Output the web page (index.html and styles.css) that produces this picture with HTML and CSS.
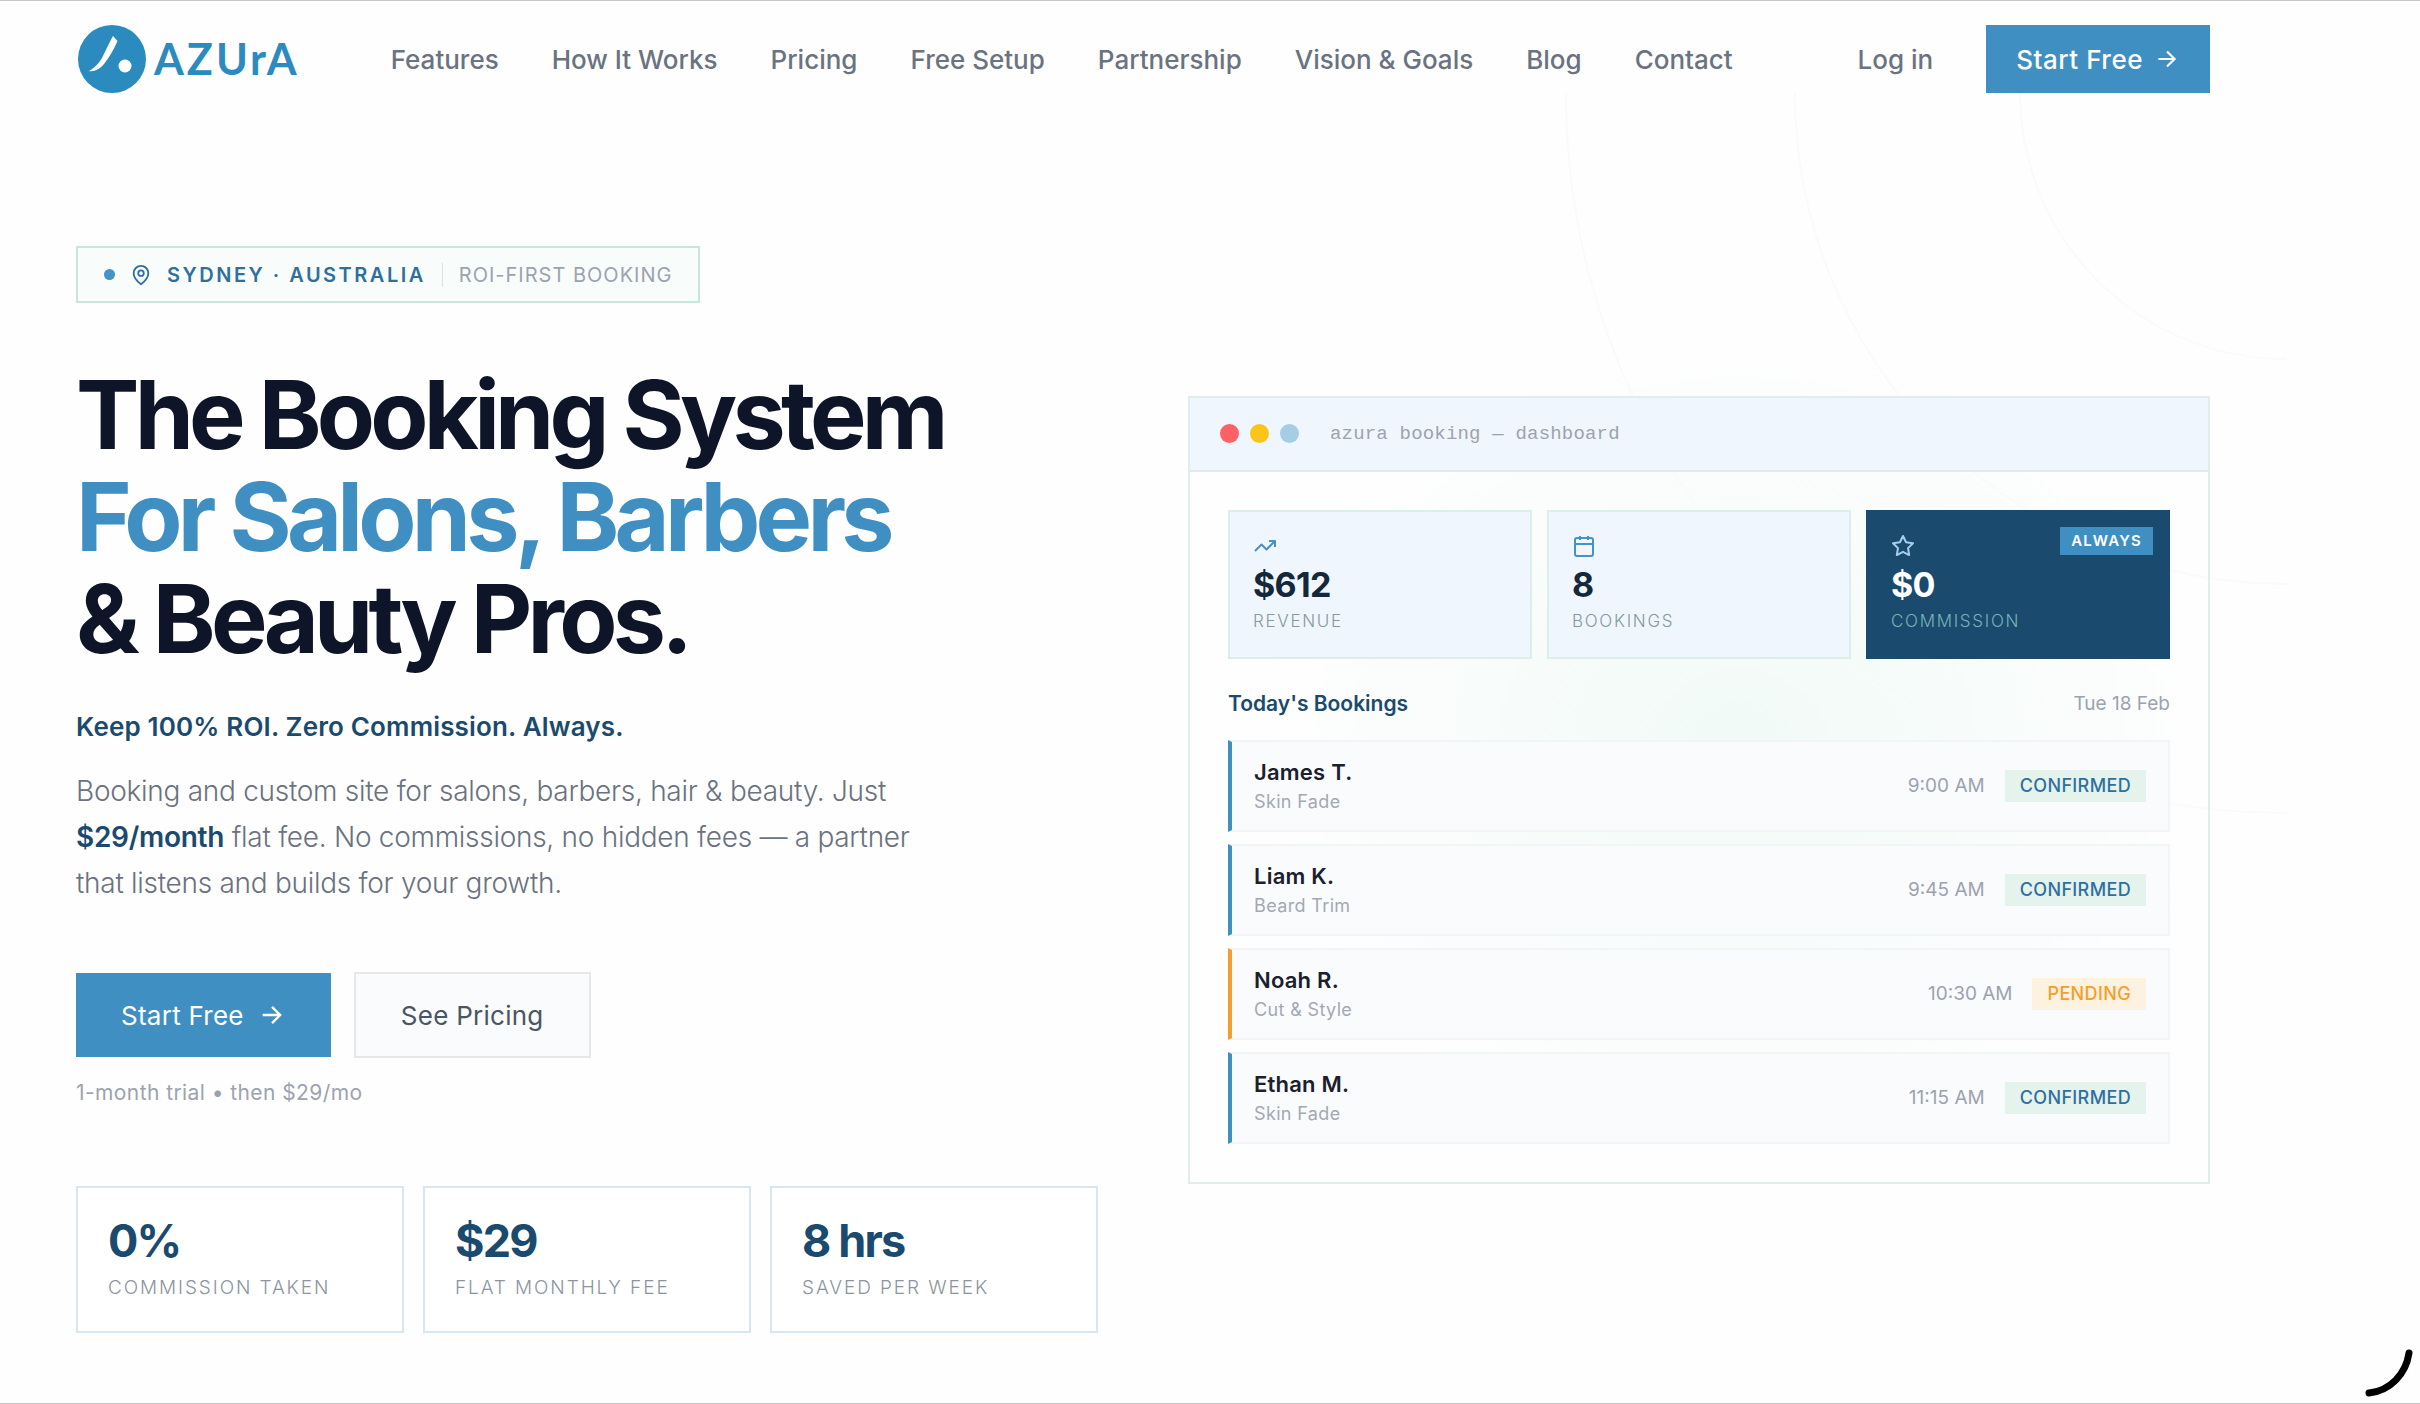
FILE: index.html
```html
<!DOCTYPE html>
<html lang="en">
  <head>
    <meta charset="utf-8" />
    <meta name="viewport" content="width=device-width, initial-scale=1" />
    <title>Azura Booking</title>
    <link rel="stylesheet" href="styles.css">
  </head>

  <body>
    <div class="page">
      <header class="site-header">
        <a class="logo" href="#">
          <svg class="logo-mark" viewBox="0 0 68 68" aria-hidden="true">
            <circle cx="34" cy="34" r="34" fill="#2b8bbf"/>
            <path d="M35 11 L39.500 16 C36 24 31 33 26 39 C22 44 16 47 11 46 C18 42 22 37 25 31 C28 25 31 18 35 11 Z" fill="#fff"/>
            <circle cx="47" cy="41" r="6.500" fill="#fff"/>
          </svg>
          <span class="logo-text">AZUrA</span>
        </a>
        <nav class="main-nav">
          <a href="#features">Features</a>
          <a href="#how">How It Works</a>
          <a href="#pricing">Pricing</a>
          <a href="#setup">Free Setup</a>
          <a href="#partnership">Partnership</a>
          <a href="#vision">Vision &amp; Goals</a>
          <a href="#blog">Blog</a>
          <a href="#contact">Contact</a>
        </nav>
        <div class="header-actions">
          <a class="login" href="#login">Log in</a>
          <button class="btn btn-primary btn-small" type="button">Start Free
            <svg class="arrow" viewBox="0 0 24 24"><path d="M4 12h15M12 5l7 7-7 7"/></svg>
          </button>
        </div>
      </header>

      <main class="hero">
        <svg class="rings" viewBox="0 0 722 722" aria-hidden="true">
          <circle cx="722" cy="0" r="266"/>
          <circle cx="722" cy="0" r="491"/>
          <circle cx="722" cy="0" r="720"/>
        </svg>

        <section class="intro">
          <div class="badge">
            <span class="badge-dot"></span>
            <svg class="pin" viewBox="0 0 24 24"><path d="M20 10c0 6-8 12-8 12s-8-6-8-12a8 8 0 0 1 16 0z"/><circle cx="12" cy="10" r="3"/></svg>
            <span class="badge-place">SYDNEY · AUSTRALIA</span>
            <span class="badge-note">ROI-FIRST BOOKING</span>
          </div>

          <h1>The Booking System<br><span class="accent">For Salons, Barbers</span><br>&amp; Beauty Pros.</h1>

          <p class="tagline">Keep 100% ROI. Zero Commission. Always.</p>
          <p class="lead">Booking and custom site for salons, barbers, hair &amp; beauty. Just <strong>$29/month</strong> flat fee. No commissions, no hidden fees — a partner that listens and builds for your growth.</p>

          <div class="cta">
            <button class="btn btn-primary btn-large" type="button">Start Free
              <svg class="arrow" viewBox="0 0 24 24"><path d="M4 12h15M12 5l7 7-7 7"/></svg>
            </button>
            <button class="btn btn-outline" type="button">See Pricing</button>
          </div>
          <p class="cta-note">1-month trial • then $29/mo</p>

          <div class="stats">
            <div class="stat">
              <div class="stat-value">0%</div>
              <div class="stat-label">COMMISSION TAKEN</div>
            </div>
            <div class="stat">
              <div class="stat-value">$29</div>
              <div class="stat-label">FLAT MONTHLY FEE</div>
            </div>
            <div class="stat">
              <div class="stat-value">8 hrs</div>
              <div class="stat-label">SAVED PER WEEK</div>
            </div>
          </div>
        </section>

        <section class="dashboard">
          <div class="window-bar">
            <span class="dot dot-red"></span>
            <span class="dot dot-yellow"></span>
            <span class="dot dot-blue"></span>
            <span class="window-title">azura booking — dashboard</span>
          </div>
          <div class="window-body">
            <div class="metrics">
              <div class="metric">
                <svg class="metric-icon" viewBox="0 0 24 24"><path d="M2 17l6.500-6.500 5 5L22 7"/><path d="M16 7h6v6"/></svg>
                <div class="metric-value">$612</div>
                <div class="metric-label">REVENUE</div>
              </div>
              <div class="metric">
                <svg class="metric-icon" viewBox="0 0 24 24"><rect x="3" y="4" width="18" height="18" rx="2"/><path d="M3 10h18M8 2v4M16 2v4"/></svg>
                <div class="metric-value">8</div>
                <div class="metric-label">BOOKINGS</div>
              </div>
              <div class="metric metric-dark">
                <span class="always">ALWAYS</span>
                <svg class="metric-icon" viewBox="0 0 24 24"><path d="M12 2l3.090 6.260L22 9.270l-5 4.870 1.180 6.880L12 17.770l-6.180 3.250L7 14.140 2 9.270l6.910-1.010z"/></svg>
                <div class="metric-value">$0</div>
                <div class="metric-label">COMMISSION</div>
              </div>
            </div>

            <div class="list-head">
              <h2>Today's Bookings</h2>
              <span class="date">Tue 18 Feb</span>
            </div>

            <ul class="bookings">
              <li class="booking">
                <div class="who">
                  <div class="name">James T.</div>
                  <div class="service">Skin Fade</div>
                </div>
                <span class="time">9:00 AM</span>
                <span class="status">CONFIRMED</span>
              </li>
              <li class="booking">
                <div class="who">
                  <div class="name">Liam K.</div>
                  <div class="service">Beard Trim</div>
                </div>
                <span class="time">9:45 AM</span>
                <span class="status">CONFIRMED</span>
              </li>
              <li class="booking pending">
                <div class="who">
                  <div class="name">Noah R.</div>
                  <div class="service">Cut &amp; Style</div>
                </div>
                <span class="time">10:30 AM</span>
                <span class="status">PENDING</span>
              </li>
              <li class="booking">
                <div class="who">
                  <div class="name">Ethan M.</div>
                  <div class="service">Skin Fade</div>
                </div>
                <span class="time">11:15 AM</span>
                <span class="status">CONFIRMED</span>
              </li>
            </ul>
          </div>
        </section>
      </main>
    </div>

    <svg class="corner-arc" viewBox="0 0 50 50" aria-hidden="true"><path d="M45 5 C42 26 26 43 5 45"/></svg>
  </body>
</html>
```

FILE: styles.css
```css
* {
  box-sizing: border-box;
}
body {
  margin: 0;
  min-height: 100vh;
  border-top: 1px solid #c8c8c8;
  border-bottom: 1px solid #c8c8c8;
  background-color: #fefefe;
  font-family: Inter, "Liberation Sans", sans-serif;
  color: #0f1528;
  overflow-x: hidden;
}
h1, h2, p, ul {
  margin: 0;
  padding: 0;
}
a {
  color: inherit;
  text-decoration: none;
}
svg {
  display: block;
  flex-shrink: 0;
}
.page {
  margin-right: 134px;
}

/* header */
.site-header {
  display: flex;
  align-items: center;
  padding: 24px 76px 0;
  font-size: 26px;
  font-weight: 500;
  color: #6b7280;
}
.logo {
  display: flex;
  align-items: center;
  gap: 8px;
  margin-left: 2px;
  color: #2b8bbf;
}
.logo-mark {
  width: 68px;
  height: 68px;
}
.logo-text {
  font-family: Lato, sans-serif;
  font-size: 43px;
  font-weight: 700;
  line-height: 68px;
  letter-spacing: 3px;
}
.main-nav {
  display: flex;
  gap: 53px;
  margin-left: 91px;
  white-space: nowrap;
}
.header-actions {
  display: flex;
  align-items: center;
  gap: 53px;
  margin-left: auto;
  white-space: nowrap;
}
.btn {
  display: flex;
  align-items: center;
  justify-content: center;
  border: 0;
  font-family: inherit;
  font-size: 26px;
  font-weight: 400;
  letter-spacing: 0.01em;
  cursor: pointer;
}
.btn-primary {
  background-color: #3f8fc3;
  color: #fff;
}
.btn-small {
  height: 68px;
  padding: 0 30px;
  gap: 11px;
  font-weight: 500;
  letter-spacing: 0.02em;
}
.arrow {
  width: 26px;
  height: 26px;
  fill: none;
  stroke: #fff;
  stroke-width: 2;
}

/* hero */
.hero {
  position: relative;
  display: grid;
  grid-template-columns: 1fr 1fr;
  gap: 90px;
  align-items: center;
  padding: 153px 76px 68px;
  background: radial-gradient(ellipse 480px 420px at 76% 50%, #f1faf6, #fefefe);
  overflow: hidden;
}
.rings {
  position: absolute;
  top: 0;
  right: 0;
  width: 722px;
  height: 722px;
  fill: none;
  stroke: #f9fbfb;
  stroke-width: 2;
}
.intro, .dashboard {
  position: relative;
}
.badge {
  display: flex;
  align-items: center;
  width: fit-content;
  height: 57px;
  padding: 0 26px;
  border: 2px solid #c8e6dc;
  background-color: #f8fdfb;
  font-size: 20px;
}
.badge-dot {
  width: 11px;
  height: 11px;
  border-radius: 50%;
  background-color: #4592c6;
}
.pin {
  width: 22px;
  height: 22px;
  margin: 0 15px;
  fill: none;
  stroke: #2f6f9f;
  stroke-width: 2;
}
.badge-place {
  font-weight: 600;
  letter-spacing: 0.125em;
  color: #2f6f9f;
}
.badge-note {
  margin-left: 16px;
  padding-left: 16px;
  border-left: 1px solid #dde3e3;
  letter-spacing: 0.05em;
  color: #9ca3af;
}
h1 {
  margin-top: 61px;
  font-size: 95px;
  font-weight: 700;
  line-height: 102px;
  letter-spacing: -0.05em;
  white-space: nowrap;
}
.accent {
  color: #3f8fc3;
}
.tagline {
  margin-top: 37px;
  font-size: 26px;
  font-weight: 600;
  line-height: 40px;
  letter-spacing: 0.006em;
  color: #1b4a6f;
}
.lead {
  max-width: 860px;
  margin-top: 21px;
  font-size: 28px;
  font-weight: 300;
  line-height: 46px;
  letter-spacing: -0.01em;
  color: #6b7280;
}
.lead strong {
  font-weight: 600;
  color: #1b4a6f;
}
.cta {
  display: flex;
  align-items: center;
  gap: 23px;
  margin-top: 66px;
}
.btn-large {
  height: 84px;
  padding: 0 45px;
  gap: 14px;
}
.btn-large .arrow {
  width: 28px;
  height: 28px;
}
.btn-outline {
  height: 86px;
  padding: 0 45px;
  border: 2px solid #e5e7eb;
  background-color: #f9fbfc;
  color: #4b5563;
}
.cta-note {
  margin-top: 20px;
  font-size: 21px;
  line-height: 30px;
  letter-spacing: 0.02em;
  color: #9ca3af;
}
.stats {
  display: grid;
  grid-template-columns: repeat(3, 1fr);
  gap: 19px;
  margin-top: 78px;
}
.stat {
  padding: 30px;
  border: 2px solid #d8e6f0;
  background-color: #fff;
}
.stat-value {
  font-size: 45px;
  font-weight: 700;
  line-height: 45px;
  letter-spacing: -0.04em;
  color: #1b4a6f;
}
.stat-label {
  margin-top: 12px;
  font-size: 19px;
  font-weight: 300;
  line-height: 26px;
  letter-spacing: 0.1em;
  color: #8d94a0;
}

/* dashboard preview */
.dashboard {
  border: 2px solid #dfeeea;
}
.window-bar {
  display: flex;
  align-items: center;
  gap: 11px;
  height: 74px;
  padding: 0 30px;
  border-bottom: 2px solid #e0ecec;
  background-color: #f0f6fd;
}
.dot {
  width: 19px;
  height: 19px;
  border-radius: 50%;
}
.dot-red {
  background-color: #fd6065;
}
.dot-yellow {
  background-color: #fcc419;
}
.dot-blue {
  background-color: #a5cde5;
}
.window-title {
  margin-left: 20px;
  font-family: "Liberation Mono", monospace;
  font-size: 19px;
  letter-spacing: 0.01em;
  color: #9ca3af;
}
.window-body {
  padding: 38px;
}
.metrics {
  display: grid;
  grid-template-columns: repeat(3, 1fr);
  gap: 15px;
}
.metric {
  position: relative;
  padding: 22px 23px 24px;
  border: 2px solid #dceeea;
  background-color: #f0f6fd;
}
.metric-icon {
  width: 24px;
  height: 24px;
  fill: none;
  stroke: #4592c6;
  stroke-width: 2;
  stroke-linejoin: round;
}
.metric-value {
  margin-top: 7px;
  font-size: 34px;
  font-weight: 700;
  line-height: 40px;
  letter-spacing: -0.02em;
  color: #13283a;
}
.metric-label {
  margin-top: 4px;
  font-size: 17px;
  font-weight: 300;
  line-height: 24px;
  letter-spacing: 0.1em;
  color: #85999d;
}
.metric-dark {
  border-color: #1b4a6f;
  background-color: #1b4a6f;
}
.metric-dark .metric-icon {
  stroke: #a5cdf0;
}
.metric-dark .metric-value {
  color: #fff;
}
.metric-dark .metric-label {
  color: #78b3b3;
}
.always {
  position: absolute;
  top: 15px;
  right: 15px;
  padding: 0 11px;
  background-color: #3f8fc3;
  font-size: 15px;
  font-weight: 600;
  line-height: 28px;
  letter-spacing: 0.08em;
  color: #fff;
}
.list-head {
  display: flex;
  justify-content: space-between;
  align-items: center;
  margin-top: 31px;
}
h2 {
  font-size: 21px;
  font-weight: 600;
  line-height: 28px;
  color: #1b4a6f;
}
.date {
  font-size: 19px;
  color: #9ca3af;
}
.bookings {
  display: flex;
  flex-direction: column;
  gap: 12px;
  margin-top: 22px;
  list-style: none;
}
.booking {
  display: flex;
  align-items: center;
  padding: 16px 22px;
  border: 2px solid #f2f5f7;
  border-left: 4px solid #3f8fc3;
  background-color: #fafbfd;
}
.who {
  flex: 1;
}
.name {
  font-size: 22px;
  font-weight: 600;
  line-height: 28px;
  letter-spacing: 0.01em;
  color: #1a202c;
}
.service {
  margin-top: 4px;
  font-size: 18px;
  line-height: 24px;
  letter-spacing: 0.02em;
  color: #a3a9b3;
}
.time {
  font-size: 19px;
  color: #9ca3af;
}
.status {
  margin-left: 20px;
  padding: 0 15px;
  background-color: #e4f4ed;
  font-size: 18px;
  font-weight: 500;
  line-height: 32px;
  letter-spacing: 0.02em;
  color: #2f6f9f;
}
.pending {
  border-left-color: #f59e2b;
}
.pending .status {
  background-color: #fdf1e0;
  color: #f59e2b;
}

.corner-arc {
  position: absolute;
  right: 6px;
  bottom: 6px;
  width: 50px;
  height: 50px;
  fill: none;
  stroke: #000;
  stroke-width: 7;
  stroke-linecap: round;
}
```
